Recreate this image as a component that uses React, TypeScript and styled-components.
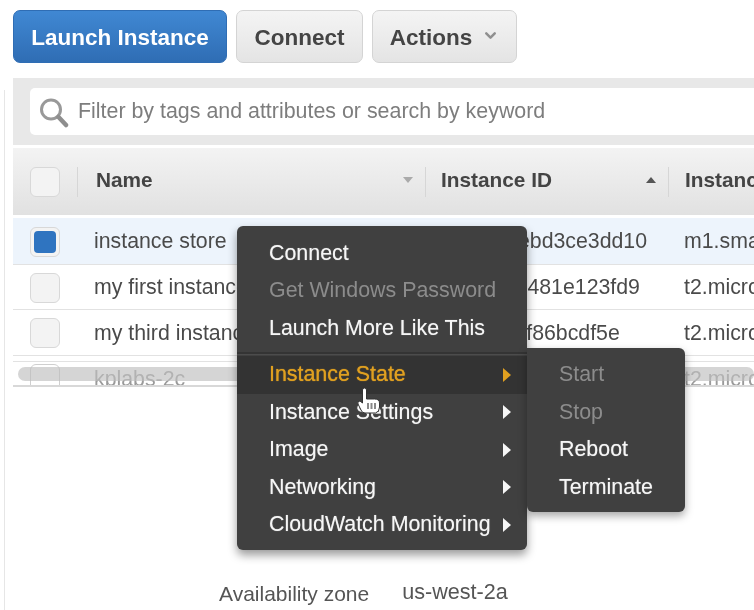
import { createGlobalStyle, styled } from "styled-components";
import { ChevronDown } from "lucide-react";

const Global = createGlobalStyle`
  html, body { margin: 0; padding: 0; background: #fff; }
  body { font-family: "Liberation Sans", Arial, sans-serif; }
`;

const Page = styled.div`
  position: relative;
  width: 754px;
  height: 610px;
  overflow: hidden;
  box-sizing: border-box;
  padding: 10px 0 0 13px;
  filter: blur(0.6px);

  &::before {
    content: "";
    position: absolute;
    left: 4px;
    top: 90px;
    bottom: 0;
    width: 1px;
    background: #e6e6e6;
  }
`;

const Toolbar = styled.div`
  display: flex;
  gap: 9px;
  height: 53px;
  margin-bottom: 15px;
`;

const Button = styled.div<{ $primary?: boolean; $width: number }>`
  width: ${(p) => p.$width}px;
  box-sizing: border-box;
  display: flex;
  align-items: center;
  justify-content: center;
  gap: 10px;
  padding-top: 3px;
  border-radius: 7px;
  font-size: 22.5px;
  font-weight: 700;
  color: ${(p) => (p.$primary ? "#fff" : "#444")};
  background: ${(p) =>
    p.$primary ? "linear-gradient(#4088d3, #2f6db4)" : "linear-gradient(#f4f4f4, #e4e4e4)"};
  border: 1px solid ${(p) => (p.$primary ? "#2f6db4" : "#d4d4d4")};

  svg { margin-top: -5px; }
`;

const FilterBar = styled.div`
  background: #e8e8e8;
  padding: 10px 0 10px 17px;
  margin-bottom: 3px;
`;

const FilterInput = styled.div`
  height: 47px;
  display: flex;
  align-items: center;
  gap: 9px;
  padding-left: 9px;
  background: #fff;
  border-radius: 5px 0 0 5px;
  font-size: 21.4px;
  color: #7d7d7d;
  white-space: nowrap;
  svg { flex: none; }
`;

const columns = "64px 348px 243px 1fr";

const HeadRow = styled.div`
  display: grid;
  grid-template-columns: ${columns};
  align-items: center;
  height: 67px;
  background: linear-gradient(#f3f3f3, #e1e1e1);
  margin-bottom: 3px;
`;

const HeadCell = styled.div<{ $pad: number }>`
  height: 30px;
  display: flex;
  align-items: center;
  justify-content: space-between;
  padding: 0 12px 4px ${(p) => p.$pad}px;
  box-sizing: border-box;
  border-left: 1px solid #d6d6d6;
  font-size: 20.8px;
  font-weight: 700;
  color: #444;
  white-space: nowrap;
`;

const Caret = styled.span<{ $up?: boolean }>`
  width: 0;
  height: 0;
  border-left: 5px solid transparent;
  border-right: 5px solid transparent;
  ${(p) => (p.$up ? "border-bottom: 6px solid #555;" : "border-top: 6px solid #aaa;")}
`;

const Row = styled.div<{ $selected?: boolean; $height: number }>`
  display: grid;
  grid-template-columns: ${columns};
  align-items: center;
  height: ${(p) => p.$height}px;
  box-sizing: border-box;
  padding-top: 1px;
  background: ${(p) => (p.$selected ? "#edf4fc" : "#fff")};
  border-bottom: 1px solid #e2e2e2;
  font-size: 21.3px;
  color: #4a4a4a;
  white-space: nowrap;
`;

const FadedRow = styled(Row)`
  background: transparent;
  color: #9a9a9a;
  border-bottom: none;
`;

const Clip = styled.div`
  position: relative;
  height: 31px;
  overflow: hidden;
  box-sizing: border-box;
  border-bottom: 2px solid #d8d8d8;

  &::before {
    content: "";
    position: absolute;
    left: 0;
    right: 0;
    top: 5px;
    height: 1px;
    background: #e2e2e2;
  }
`;

const CheckCell = styled.div`
  padding-left: 17px;
`;

const Check = styled.div<{ $checked?: boolean; $ghost?: boolean }>`
  width: 30px;
  height: 30px;
  box-sizing: border-box;
  border-radius: 6px;
  border: 1px solid ${(p) => (p.$ghost ? "#cfcfcf" : "#d8d8d8")};
  background: ${(p) => (p.$ghost ? "transparent" : "#f3f3f3")};
  padding: 3px;
  &::after {
    content: "";
    display: ${(p) => (p.$checked ? "block" : "none")};
    width: 100%;
    height: 100%;
    border-radius: 4px;
    background: #2f74c0;
  }
`;

const TextCell = styled.div<{ $pad: number }>`
  padding-left: ${(p) => p.$pad}px;
  overflow: hidden;
`;

const Scrollbar = styled.div`
  position: absolute;
  left: 18px;
  right: 0;
  top: 367px;
  height: 14px;
  border-radius: 7px;
  background: rgba(190, 190, 190, 0.65);
`;

const Details = styled.div`
  display: flex;
  align-items: flex-start;
  gap: 33px;
  margin: 192px 0 0 206px;
  color: #555;
`;

const DetailLabel = styled.span`
  margin-top: 3px;
  font-size: 21px;
`;

const DetailValue = styled.span`
  font-size: 21.6px;
`;

const Menu = styled.div`
  position: absolute;
  left: 237px;
  top: 226px;
  width: 290px;
  box-sizing: border-box;
  padding: 8.5px 0 6.5px;
  background: #404040;
  border-radius: 6px;
  box-shadow: 0 5px 10px rgba(0, 0, 0, 0.4);
`;

const Item = styled.div<{ $active?: boolean; $disabled?: boolean }>`
  position: relative;
  height: 37.5px;
  display: flex;
  align-items: center;
  justify-content: space-between;
  padding: 0 16px 0 32px;
  font-size: 21.4px;
  white-space: nowrap;
  color: ${(p) => (p.$disabled ? "#8c8c8c" : p.$active ? "#e0a020" : "#f6f6f6")};
  background: ${(p) => (p.$active ? "#333" : "transparent")};
  text-shadow: 0 0 1px ${(p) => (p.$disabled ? "transparent" : p.$active ? "#e0a020" : "#ffffff80")};
`;

const Arrow = styled.span<{ $active?: boolean }>`
  width: 0;
  height: 0;
  border-top: 7px solid transparent;
  border-bottom: 7px solid transparent;
  border-left: 8px solid ${(p) => (p.$active ? "#e0a020" : "#f6f6f6")};
`;

const Separator = styled.div`
  height: 2px;
  margin: 5px 0 1px;
  background: #343434;
  border-bottom: 1px solid #4c4c4c;
`;

const SubMenu = styled.div`
  position: absolute;
  left: 527px;
  top: 348px;
  width: 158px;
  height: 164px;
  box-sizing: border-box;
  padding-top: 8px;
  background: #404040;
  border-radius: 0 6px 6px 6px;
  box-shadow: 0 4px 9px rgba(0, 0, 0, 0.35);
`;

const Cursor = styled.svg`
  position: absolute;
  left: 356px;
  top: 386px;
`;

const SearchIcon = () => (
  <svg width="30" height="32" viewBox="0 0 30 32" fill="none">
    <circle cx="12" cy="13.5" r="9.5" stroke="#999" strokeWidth="3" />
    <path d="M19.5 21 27 29" stroke="#8e8e8e" strokeWidth="4.5" strokeLinecap="round" />
  </svg>
);

const rows = [
  { name: "instance store", id: "i-0f2a1bebd3ce3dd10", type: "m1.small", selected: true, height: 47 },
  { name: "my first instance", id: "i-08ecf2c481e123fd9", type: "t2.micro", height: 45 },
  { name: "my third instance", id: "i-0cccf1ef86bcdf5e", type: "t2.micro", height: 46 },
];

const submenu = [
  { label: "Start", disabled: true },
  { label: "Stop", disabled: true },
  { label: "Reboot" },
  { label: "Terminate" },
];

export default function App() {
  return (
    <Page>
      <Global />
      <Toolbar>
        <Button $primary $width={214}>Launch Instance</Button>
        <Button $width={127}>Connect</Button>
        <Button $width={145}>
          Actions
          <ChevronDown size={17} strokeWidth={3.5} color="#8f8f8f" />
        </Button>
      </Toolbar>

      <FilterBar>
        <FilterInput>
          <SearchIcon />
          Filter by tags and attributes or search by keyword
        </FilterInput>
      </FilterBar>

      <HeadRow>
        <CheckCell><Check /></CheckCell>
        <HeadCell $pad={18}>Name<Caret /></HeadCell>
        <HeadCell $pad={15}>Instance ID<Caret $up /></HeadCell>
        <HeadCell $pad={16}>Instance Type</HeadCell>
      </HeadRow>

      {rows.map((r) => (
        <Row key={r.name} $selected={r.selected} $height={r.height}>
          <CheckCell><Check $checked={r.selected} /></CheckCell>
          <TextCell $pad={17}>{r.name}</TextCell>
          <TextCell $pad={16}>{r.id}</TextCell>
          <TextCell $pad={16}>{r.type}</TextCell>
        </Row>
      ))}
      <Clip>
        <FadedRow $height={45}>
          <CheckCell><Check $ghost /></CheckCell>
          <TextCell $pad={17}>kplabs-2c</TextCell>
          <TextCell $pad={16}>i-0d3b7a61c09e</TextCell>
          <TextCell $pad={16}>t2.micro</TextCell>
        </FadedRow>
      </Clip>
      <Scrollbar />

      <Details>
        <DetailLabel>Availability zone</DetailLabel>
        <DetailValue>us-west-2a</DetailValue>
      </Details>

      <Menu>
        <Item>Connect</Item>
        <Item $disabled>Get Windows Password</Item>
        <Item>Launch More Like This</Item>
        <Separator />
        <Item $active>Instance State<Arrow $active /></Item>
        <Item>Instance Settings<Arrow /></Item>
        <Item>Image<Arrow /></Item>
        <Item>Networking<Arrow /></Item>
        <Item>CloudWatch Monitoring<Arrow /></Item>
      </Menu>
      <SubMenu>
        {submenu.map((s) => (
          <Item key={s.label} $disabled={s.disabled}>{s.label}</Item>
        ))}
      </SubMenu>
      <Cursor width="26" height="28" viewBox="0 0 26 28">
        <path
          d="M6.5 4a2 2 0 0 1 4 0V13h8q5 0 5 4v4q0 5-4 6H9q-3 0-4-3L2 18q-1-3 2-3l2.5 2Z"
          fill="#fff"
          stroke="#333"
        />
        <path d="M12 17v6M15.5 17v6M19 17v6" stroke="#888" strokeWidth="2" />
      </Cursor>
    </Page>
  );
}
